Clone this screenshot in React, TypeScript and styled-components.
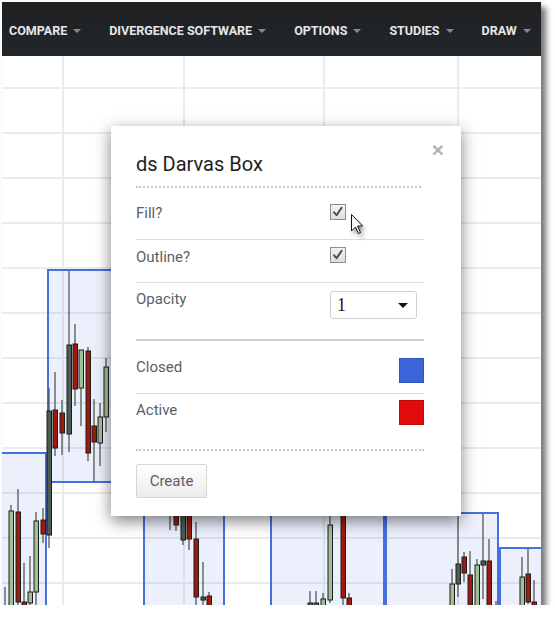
import React from "react";
import styled, { createGlobalStyle } from "styled-components";

const Global = createGlobalStyle`
  html, body { margin: 0; padding: 0; background: #fff; }
  * { box-sizing: border-box; }
`;

const Frame = styled.div`
  position: relative;
  margin: 2px 0 0 2px;
  width: 539px;
  height: 603px;
  display: flex;
  flex-direction: column;
  overflow: hidden;
  box-shadow: 5px 5px 6px rgba(0, 0, 0, 0.55);
  font-family: Roboto, "Liberation Sans", sans-serif;
`;

const Nav = styled.nav`
  height: 54px;
  flex: none;
  background: linear-gradient(#1f2022, #22272b);
  display: flex;
  align-items: center;
  padding: 2px 0 0 7px;
  gap: 28px;
`;

const NavItem = styled.div`
  display: flex;
  align-items: center;
  gap: 6px;
  font-weight: 700;
  font-size: 12.5px;
  color: #e6e6e6;
  white-space: nowrap;
`;

const Caret = styled.span`
  width: 0;
  height: 0;
  border-left: 4.5px solid transparent;
  border-right: 4.5px solid transparent;
  border-top: 4px solid #8a8a8a;
  margin-top: 1px;
`;

const ChartArea = styled.div`
  position: relative;
  flex: 1;
  background: #fff;
`;

const ChartSvg = styled.svg`
  display: block;
  width: 539px;
  height: 549px;
`;

const Dialog = styled.div`
  position: absolute;
  left: 109px;
  top: 70px;
  width: 350px;
  height: 390px;
  background: #fff;
  box-shadow: 0 5px 15px rgba(0, 0, 0, 0.5);
  padding: 0 37px 0 25px;
`;

const Close = styled.span`
  position: absolute;
  right: 17px;
  top: 13px;
  font-family: "Liberation Sans", sans-serif;
  font-weight: 700;
  font-size: 21px;
  line-height: 21px;
  color: #b3b3b3;
`;

const Title = styled.h4`
  margin: 0;
  padding: 26px 0 10px;
  margin-right: 3px;
  font-weight: 400;
  font-size: 20px;
  line-height: 24px;
  color: #1e1e1e;
  border-bottom: 2px dotted #c8c8c8;
`;

const Row = styled.div<{ $h: number; $pt: number; $line?: "thin" | "thick" | "dotted" }>`
  height: ${(p) => p.$h}px;
  padding-top: ${(p) => p.$pt}px;
  display: grid;
  grid-template-columns: 194px 1fr;
  align-items: start;
  border-bottom: ${(p) =>
    p.$line === "thick"
      ? "2px solid #cfcfcf"
      : p.$line === "dotted"
      ? "2px dotted #c8c8c8"
      : "1px solid #dcdcdc"};
`;

const Label = styled.span`
  font-size: 15px;
  line-height: 20px;
  color: #5a5f66;
`;

const Check = styled.span<{ $mt: number }>`
  display: block;
  width: 16px;
  height: 16px;
  margin-top: ${(p) => p.$mt}px;
`;

const Select = styled.div`
  margin-top: 2px;
  width: 87px;
  height: 28px;
  border: 1px solid #cfcfcf;
  border-radius: 3px;
  display: flex;
  align-items: center;
  justify-content: space-between;
  padding: 0 8px 0 6px;
`;

const SelectValue = styled.span`
  font-family: "Liberation Serif", serif;
  font-size: 18px;
  color: #3a0d0d;
`;

const SelectCaret = styled.span`
  width: 0;
  height: 0;
  border-left: 5px solid transparent;
  border-right: 5px solid transparent;
  border-top: 5px solid #111;
`;

const Swatch = styled.span<{ $c: string; $mt: number }>`
  justify-self: end;
  display: block;
  width: 25px;
  height: 25px;
  margin-top: ${(p) => p.$mt}px;
  background: ${(p) => p.$c};
  border: 1px solid rgba(0, 0, 0, 0.15);
`;

const Footer = styled.div`
  padding-top: 13px;
`;

const Button = styled.button`
  width: 71px;
  height: 34px;
  border: 1px solid #d6d6d6;
  border-radius: 2px;
  background: linear-gradient(#ffffff, #ececec);
  font-family: Roboto, "Liberation Sans", sans-serif;
  font-size: 15px;
  color: #5a5f66;
  padding: 0;
`;

const Cursor = styled.svg`
  position: absolute;
  left: 349px;
  top: 212px;
  overflow: visible;
`;

type C = [number, number, number, number?, number?, string?];
const candles: C[] = [
  [5, 587, 610],
  [11, 505, 610, 511, 610, "g"],
  [18, 489, 610, 512, 602, "r"],
  [24, 563, 610, 602, 610, "r"],
  [30, 556, 610, 592, 603, "g"],
  [36, 512, 610, 521, 592, "g"],
  [43, 508, 543, 520, 534, "r"],
  [49, 388, 548, 411, 535, "d"],
  [55, 372, 456, 410, 448, "r"],
  [62, 400, 455, 413, 433, "r"],
  [69, 271, 452, 345, 434, "d"],
  [75, 324, 406, 344, 389, "r"],
  [81, 350, 426, 350, 388, "g"],
  [88, 347, 461, 351, 453, "r"],
  [94, 399, 482, 426, 442, "r"],
  [100, 403, 466, 417, 443, "g"],
  [106, 358, 432, 367, 417, "g"],
  [170, 480, 530],
  [176, 490, 531, 500, 525, "r"],
  [183, 480, 545, 490, 540, "d"],
  [189, 490, 550, 500, 539, "r"],
  [196, 522, 610, 539, 597, "r"],
  [203, 562, 610, 597, 600, "d"],
  [209, 592, 610, 596, 610, "r"],
  [310, 591, 610, 603, 606, "d"],
  [316, 591, 610, 603, 606, "d"],
  [323, 593, 610, 599, 610, "g"],
  [330, 480, 603, 525, 600, "g"],
  [343, 480, 610, 490, 598, "r"],
  [349, 593, 610, 598, 610, "r"],
  [452, 569, 610, 584, 610, "g"],
  [458, 515, 597, 564, 584, "d"],
  [464, 552, 582, 557, 573, "r"],
  [470, 551, 610, 575, 610, "r"],
  [477, 559, 610, 565, 610, "g"],
  [483, 514, 599, 561, 565, "d"],
  [489, 539, 610, 561, 610, "r"],
  [496, 601, 610],
  [522, 557, 610, 577, 610, "g"],
  [528, 548, 604, 574, 602, "r"],
  [534, 580, 610, 602, 610, "r"],
];

const fills: Record<string, string> = { r: "#9e1a0f", g: "#9fbf95", d: "#4b5d52" };

const boxes = [
  [-4, 453, 46, 620],
  [48, 270, 140, 482],
  [144, 430, 224, 620],
  [271, 440, 384, 620],
  [386, 513, 498, 620],
  [500, 548, 560, 620],
];

const vLines = [63, 184, 324, 458];
const hLines = [88, 133, 178, 223, 268, 313, 358, 403, 448, 493, 538, 583];

function Chart() {
  return (
    <ChartSvg viewBox="2 56 539 549">
      {vLines.map((x) => (
        <line key={"v" + x} x1={x} x2={x} y1={56} y2={620} stroke="#ebebeb" strokeWidth={2} />
      ))}
      {hLines.map((y) => (
        <line key={"h" + y} x1={0} x2={560} y1={y} y2={y} stroke="#ebebeb" strokeWidth={2} />
      ))}
      {boxes.map(([x1, y1, x2, y2], i) => (
        <rect
          key={"b" + i}
          x={x1}
          y={y1}
          width={x2 - x1}
          height={y2 - y1}
          fill="rgba(65,105,225,0.1)"
          stroke="#4670e0"
          strokeWidth={2}
        />
      ))}
      {candles.map(([x, wt, wb, bt, bb, c], i) => (
        <g key={"c" + i}>
          <line x1={x} x2={x} y1={wt} y2={wb} stroke="#555" strokeWidth={1.3} />
          {bt !== undefined && bb !== undefined && c && (
            <rect
              x={x - 2}
              y={bt}
              width={4.5}
              height={Math.max(bb - bt, 2)}
              fill={fills[c]}
              stroke="#1c1c1c"
              strokeWidth={1}
            />
          )}
        </g>
      ))}
    </ChartSvg>
  );
}

function CheckBox({ mt }: { mt: number }) {
  return (
    <Check $mt={mt}>
      <svg width="16" height="16" viewBox="0 0 16 16">
        <defs>
          <linearGradient id="cbg" x1="0" y1="0" x2="0" y2="1">
            <stop offset="0" stopColor="#f4f4f4" />
            <stop offset="1" stopColor="#dedede" />
          </linearGradient>
        </defs>
        <rect x="0.5" y="0.5" width="15" height="15" fill="url(#cbg)" stroke="#8c8c8c" />
        <path d="M4 8.3 L6.6 11.2 L11.6 3.8" fill="none" stroke="#3d4f66" strokeWidth="2" strokeLinecap="round" strokeLinejoin="round" />
      </svg>
    </Check>
  );
}

const navItems = ["COMPARE", "DIVERGENCE SOFTWARE", "OPTIONS", "STUDIES", "DRAW"];

export default function App() {
  return (
    <>
      <Global />
      <Frame>
        <Nav>
          {navItems.map((n) => (
            <NavItem key={n}>
              {n}
              <Caret />
            </NavItem>
          ))}
        </Nav>
        <ChartArea>
          <Chart />
          <Dialog>
            <Close>×</Close>
            <Title>ds Darvas Box</Title>
            <Row $h={52} $pt={15}>
              <Label>Fill?</Label>
              <CheckBox mt={1} />
            </Row>
            <Row $h={43} $pt={7}>
              <Label>Outline?</Label>
              <CheckBox mt={0} />
            </Row>
            <Row $h={58} $pt={6} $line="thick">
              <Label>Opacity</Label>
              <Select>
                <SelectValue>1</SelectValue>
                <SelectCaret />
              </Select>
            </Row>
            <Row $h={53} $pt={16}>
              <Label>Closed</Label>
              <Swatch $c="#3b64d9" $mt={1} />
            </Row>
            <Row $h={57} $pt={6} $line="dotted">
              <Label>Active</Label>
              <Swatch $c="#e30b0b" $mt={0} />
            </Row>
            <Footer>
              <Button>Create</Button>
            </Footer>
          </Dialog>
        </ChartArea>
        <Cursor width="13" height="21" viewBox="0 0 13 21">
          <defs>
            <filter id="cs" x="-50%" y="-50%" width="250%" height="250%">
              <feGaussianBlur stdDeviation="2" />
            </filter>
          </defs>
          <path d="M3 4 L3 21 L7 17 L10 24 L12 23 L9 16 L14 16 Z" fill="rgba(0,0,0,0.45)" filter="url(#cs)" />
          <path d="M0.5 0.5 L0.5 17 L4.5 13 L7.5 19.5 L9.5 18.5 L6.5 12 L11.5 12 Z" fill="#fff" stroke="#111" strokeWidth="1" strokeLinejoin="round" />
        </Cursor>
      </Frame>
    </>
  );
}
